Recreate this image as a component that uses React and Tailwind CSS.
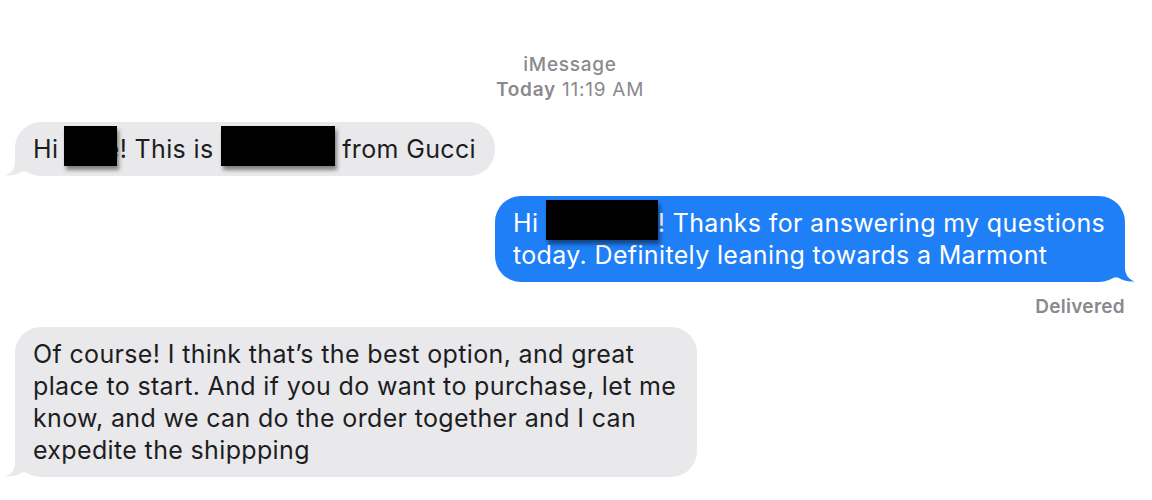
import React from 'react';

const font = { fontFamily: 'Inter, "Noto Sans", sans-serif' };

const Tail = ({ side, color }) => (
  <svg
    width="24"
    height="26"
    viewBox="0 0 24 26"
    className={`absolute bottom-0 ${side === 'left' ? '-left-[10px]' : '-right-[10px] scale-x-[-1]'}`}
  >
    <path
      d="M10 0 V12 C10 19 6 23.5 0 25.5 C6.5 26 12.5 24.5 17 21.5 L24 21.5 V0 Z"
      fill={color}
    />
  </svg>
);

const Redact = ({ w, className = '' }) => (
  <span
    className={`relative z-10 inline-block align-top h-[40px] -mt-[7px] -mb-[1px] bg-black shadow-[2px_4px_4px_rgba(0,0,0,0.45)] ${className}`}
    style={{ width: w }}
  />
);

const Bubble = ({ side, children, className = '' }) => {
  const incoming = side === 'left';
  return (
    <div
      className={`relative rounded-[26px] py-[11px] pl-[18px] text-[25px] leading-[32px] tracking-[0.35px] ${
        incoming ? 'bg-[#e9e9eb] text-[#1d1d1f]' : 'bg-[#1f7ff7] text-white'
      } ${className}`}
    >
      <Tail side={side} color={incoming ? '#e9e9eb' : '#1f7ff7'} />
      <div className="relative">{children}</div>
    </div>
  );
};

export default function App() {
  return (
    <div className="w-[1152px] h-[500px] bg-white overflow-hidden" style={font}>
      <div className="pl-[15px] pr-[27px] pt-[52px] flex flex-col">
        {/* header */}
        <div className="flex flex-col items-center text-[19px] leading-[25px] tracking-[0.75px] text-[#8a8a8e]">
          <span className="font-medium">iMessage</span>
          <span>
            <span className="font-semibold">Today</span> 11:19 AM
          </span>
        </div>

        {/* incoming 1 */}
        <div className="mt-[20px] flex">
          <Bubble side="left" className="pr-[19px]">
            Hi <Redact w="53px" className="-ml-[2px] -mr-[12px]" />e! This is <Redact w="114px" /> from Gucci
          </Bubble>
        </div>

        {/* outgoing */}
        <div className="mt-[20px] flex justify-end">
          <Bubble side="right" className="w-[630px]">
            Hi <Redact w="112px" />! Thanks for answering my questions
            <br />
            today. Definitely leaning towards a Marmont
          </Bubble>
        </div>
        <div className="mt-[13px] text-right text-[19px] leading-[24px] tracking-[0.3px] font-semibold text-[#8a8a8e]">
          Delivered
        </div>

        {/* incoming 2 */}
        <div className="mt-[8px] flex">
          <Bubble side="left" className="w-[682px]">
            Of course! I think that’s the best option, and great
            <br />
            place to start. And if you do want to purchase, let me
            <br />
            know, and we can do the order together and I can
            <br />
            expedite the shippping
          </Bubble>
        </div>
      </div>
    </div>
  );
}
